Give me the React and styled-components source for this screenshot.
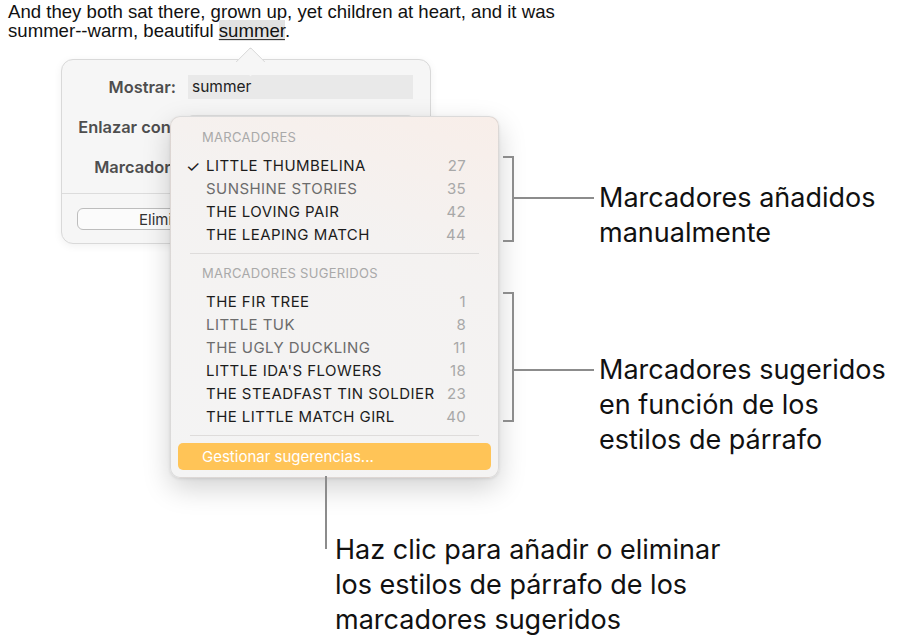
import styled, { createGlobalStyle } from "styled-components";

const GlobalStyle = createGlobalStyle`
  html, body {
    margin: 0;
    padding: 0;
    background: #ffffff;
  }
  body {
    font-family: Inter, "Liberation Sans", sans-serif;
    color: #1d1d1d;
  }
`;

const mainBookmarks = [
  { title: "LITTLE THUMBELINA", page: 27, checked: true },
  { title: "SUNSHINE STORIES", page: 35, dim: true },
  { title: "THE LOVING PAIR", page: 42 },
  { title: "THE LEAPING MATCH", page: 44 },
];

const suggested = [
  { title: "THE FIR TREE", page: 1 },
  { title: "LITTLE TUK", page: 8, dim: true },
  { title: "THE UGLY DUCKLING", page: 11, dim: true },
  { title: "LITTLE IDA'S FLOWERS", page: 18 },
  { title: "THE STEADFAST TIN SOLDIER", page: 23 },
  { title: "THE LITTLE MATCH GIRL", page: 40 },
];

export default function App() {
  return (
    <>
      <GlobalStyle />
      <Page>
        <Paragraph>
          And they both sat there, grown up, yet children at heart, and it was
          <br />
          summer--warm, beautiful <Marked>summer</Marked>.
        </Paragraph>

        <Stage>
          <Popover>
            <FormRow>
              <Label>Mostrar:</Label>
              <TextField>summer</TextField>
            </FormRow>
            <FormRow>
              <Label>Enlazar con:</Label>
              <PopupField>
                <Stepper />
              </PopupField>
            </FormRow>
            <FormRow>
              <Label>Marcador:</Label>
              <PopupField />
            </FormRow>
            <PanelDivider />
            <ButtonRow>
              <PanelButton>Eliminar</PanelButton>
            </ButtonRow>
          </Popover>

          <Menu>
            <MenuHeader>MARCADORES</MenuHeader>
            <Group>
              {mainBookmarks.map((b) => (
                <MenuItem key={b.title} $dim={b.dim}>
                  <Check>{b.checked ? "✓" : ""}</Check>
                  <ItemTitle>{b.title}</ItemTitle>
                  <ItemPage>{b.page}</ItemPage>
                </MenuItem>
              ))}
            </Group>
            <MenuSeparator />
            <MenuHeader>MARCADORES SUGERIDOS</MenuHeader>
            <Group>
              {suggested.map((b) => (
                <MenuItem key={b.title} $dim={b.dim}>
                  <Check />
                  <ItemTitle>{b.title}</ItemTitle>
                  <ItemPage>{b.page}</ItemPage>
                </MenuItem>
              ))}
            </Group>
            <MenuSeparator />
            <Highlighted>Gestionar sugerencias...</Highlighted>
          </Menu>

          <Callout $left={503} $top={116}>
            <Bracket $h={82} />
            <Arm $y={41} />
            <CalloutText $y={41}>
              Marcadores añadidos
              <br />
              manualmente
            </CalloutText>
          </Callout>

          <Callout $left={503} $top={252}>
            <Bracket $h={126} />
            <Arm $y={77} />
            <CalloutText $y={77}>
              Marcadores sugeridos
              <br />
              en función de los
              <br />
              estilos de párrafo
            </CalloutText>
          </Callout>

          <Callout $left={325} $top={436}>
            <Stem $h={73} />
            <CalloutText $y={73} $gap={8}>
              Haz clic para añadir o eliminar
              <br />
              los estilos de párrafo de los
              <br />
              marcadores sugeridos
            </CalloutText>
          </Callout>
        </Stage>
      </Page>
    </>
  );
}

const Page = styled.div`
  width: 900px;
  height: 643px;
  overflow: hidden;
  padding: 2px 0 0 8px;
  box-sizing: border-box;
`;

const Paragraph = styled.p`
  margin: 0;
  font-family: "Liberation Sans", Arial, sans-serif;
  font-size: 18.6px;
  line-height: 19px;
  color: #111;
`;

const Marked = styled.span`
  background: #e2e2e2;
  text-decoration: underline;
  text-underline-offset: 2px;
  text-decoration-color: #333;
`;

const Stage = styled.div`
  display: flow-root;
  position: relative;
  height: 603px;
  margin-left: -8px;
`;

const Popover = styled.div`
  position: relative;
  margin: 19px 0 0 61px;
  width: 370px;
  height: 185px;
  box-sizing: border-box;
  padding-top: 15px;
  background: #f6f6f6;
  border: 1px solid #d9d9d9;
  border-radius: 12px;
  box-shadow: 0 2px 8px rgba(0, 0, 0, 0.06);

  &::before {
    content: "";
    position: absolute;
    top: -9px;
    left: 178px;
    width: 20px;
    height: 20px;
    background: #f6f6f6;
    border-left: 1px solid #d9d9d9;
    border-top: 1px solid #d9d9d9;
    transform: rotate(45deg);
    border-top-left-radius: 3px;
  }
`;

const FormRow = styled.div`
  display: flex;
  align-items: center;
  height: 24px;
  margin-bottom: 16px;
`;

const Label = styled.div`
  width: 114px;
  text-align: right;
  font-size: 16.4px;
  font-weight: 600;
  color: #4e4e4e;
  white-space: nowrap;
  padding-right: 12px;
`;

const TextField = styled.div`
  width: 225px;
  height: 24px;
  line-height: 24px;
  background: #e9e9e9;
  padding-left: 4px;
  box-sizing: border-box;
  font-size: 15.5px;
  color: #222;
`;

const PopupField = styled.div`
  position: relative;
  width: 225px;
  height: 24px;
  border-radius: 5px;
  background: #e1e1e1;
`;

const Stepper = styled.span`
  position: absolute;
  right: 4px;
  top: 3px;
  width: 19px;
  height: 18px;
  border-radius: 5px;
  background: #f5a623;
`;

const PanelDivider = styled.div`
  height: 1px;
  background: #dcdcdc;
  margin-top: -2px;
`;

const ButtonRow = styled.div`
  display: flex;
  padding: 14px 0 0 15px;
`;

const PanelButton = styled.div`
  width: 180px;
  height: 22px;
  line-height: 22px;
  box-sizing: border-box;
  border: 1px solid #bdbdbd;
  border-radius: 6px;
  background: #fbfbfb;
  text-align: center;
  font-size: 15px;
  color: #333;
`;

const Menu = styled.div`
  position: absolute;
  left: 170px;
  top: 76px;
  width: 329px;
  box-sizing: border-box;
  padding: 8px 7px 7px;
  border-radius: 10px;
  border: 1px solid rgba(0, 0, 0, 0.1);
  background: linear-gradient(200deg, #f8eee9 0%, #f4f2f1 35%, #f4f4f4 100%);
  box-shadow: 0 10px 28px rgba(0, 0, 0, 0.18), 0 1px 3px rgba(0, 0, 0, 0.1);
`;

const MenuHeader = styled.div`
  height: 24px;
  line-height: 24px;
  padding-left: 24px;
  font-size: 13px;
  color: #a9a9a9;
  letter-spacing: 0.3px;
`;

const Group = styled.div`
  margin-top: 5px;
`;

const MenuItem = styled.div`
  display: flex;
  align-items: center;
  height: 23px;
  padding: 0 25px 0 8px;
  font-size: 15px;
  color: ${(p) => (p.$dim ? "#6c6c6c" : "#1c1c1c")};
`;

const Check = styled.span`
  width: 20px;
  font-size: 16px;
  color: #1c1c1c;
`;

const ItemTitle = styled.span`
  flex: 1;
  white-space: nowrap;
  letter-spacing: 0.45px;
`;

const ItemPage = styled.span`
  color: #a8a8a8;
  letter-spacing: 0.3px;
`;

const MenuSeparator = styled.div`
  height: 1px;
  background: #dedcdb;
  margin: 7px 12px;
`;

const Highlighted = styled.div`
  height: 27px;
  line-height: 27px;
  margin-top: 1px;
  border-radius: 5px;
  background: #ffc457;
  color: #ffffff;
  padding-left: 24px;
  font-size: 15px;
`;

const Callout = styled.div`
  position: absolute;
  left: ${(p) => p.$left}px;
  top: ${(p) => p.$top}px;
  display: flex;
  align-items: flex-start;
`;

const Bracket = styled.div`
  width: 9px;
  height: ${(p) => p.$h}px;
  border: 2px solid #8c8c8c;
  border-left: none;
`;

const Arm = styled.div`
  width: 80px;
  height: 2px;
  margin-top: ${(p) => p.$y}px;
  background: #8c8c8c;
`;

const Stem = styled.div`
  width: 2px;
  height: ${(p) => p.$h}px;
  background: #8c8c8c;
`;

const CalloutText = styled.div`
  margin-top: ${(p) => p.$y - 17}px;
  margin-left: ${(p) => p.$gap || 5}px;
  font-family: Inter, "Liberation Sans", sans-serif;
  font-size: 27px;
  line-height: 35px;
  color: #111;
  white-space: nowrap;
`;
